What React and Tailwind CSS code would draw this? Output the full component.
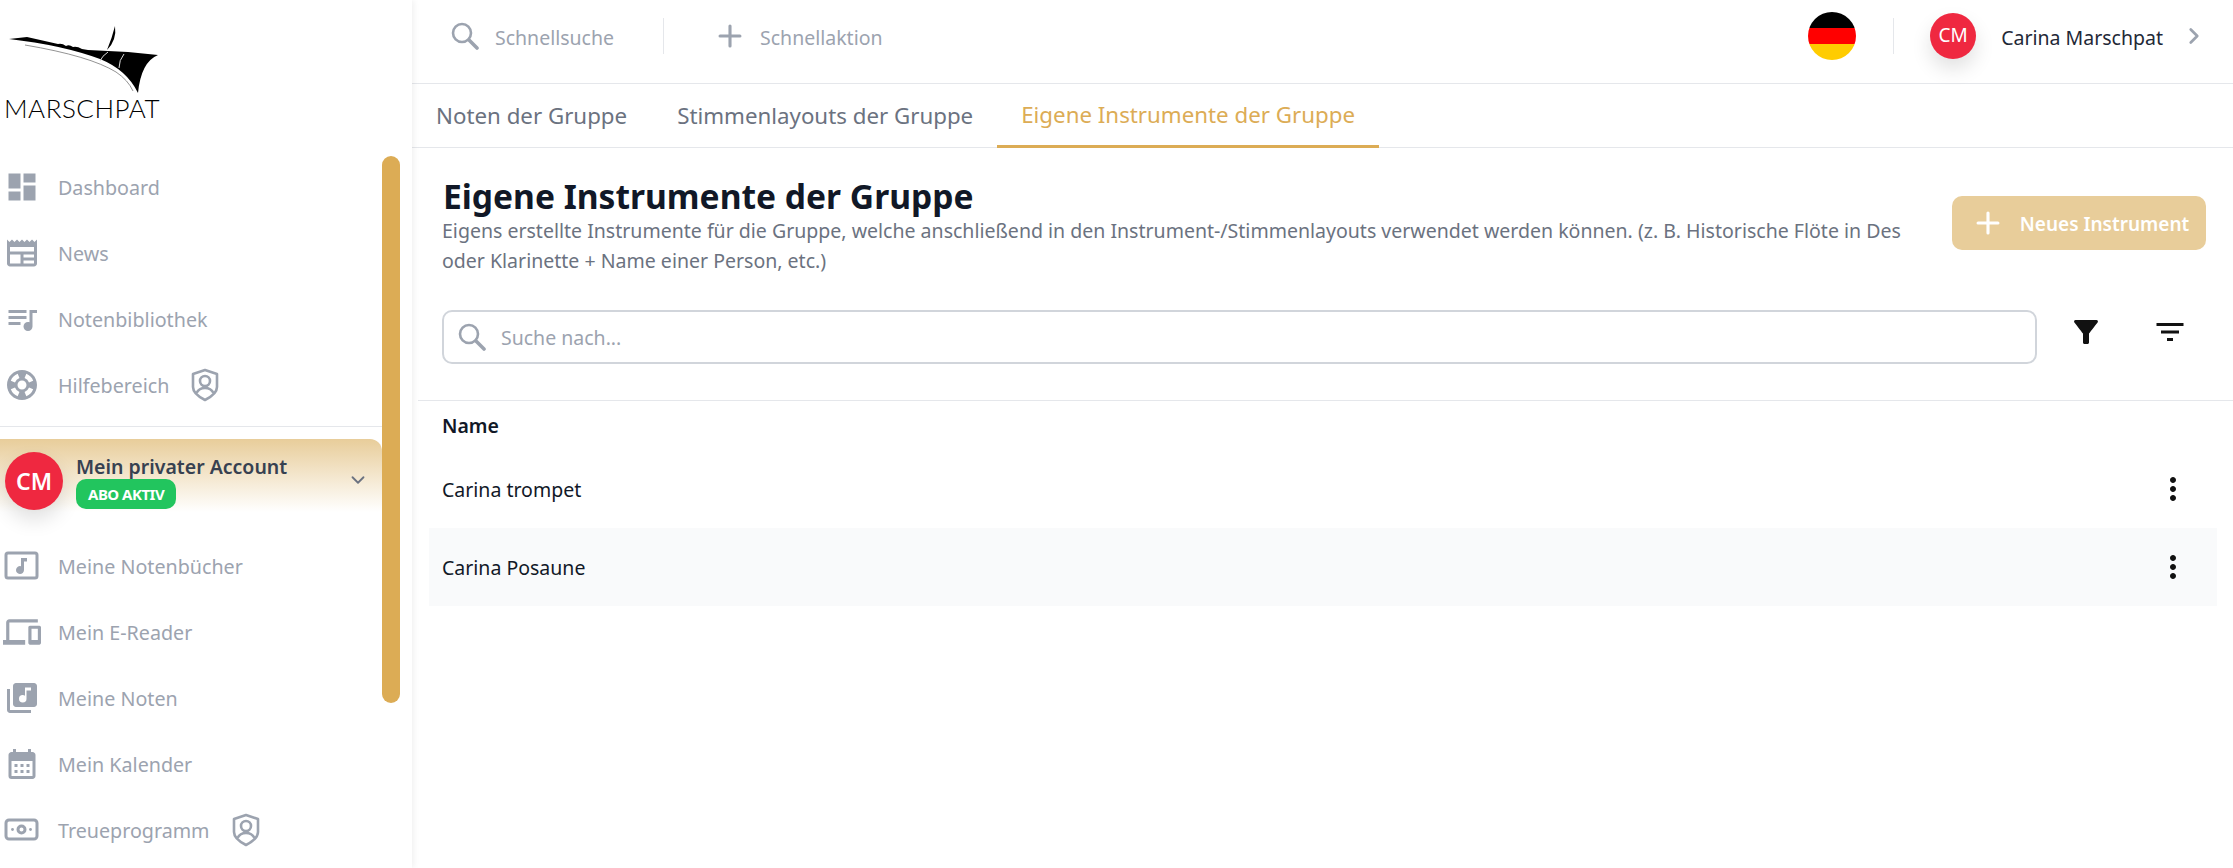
import React from 'react';
import { ChevronDown, ChevronRight, Plus } from 'lucide-react';
import {
  MdDashboard, MdNewspaper, MdQueueMusic, MdSupport, MdOutlineDevices, MdLibraryMusic,
  MdCalendarMonth, MdFilterAlt, MdFilterList, MdMoreVert,
} from 'react-icons/md';

const FONT = "font-['Noto_Sans',sans-serif]";

// square with a note in it
const NotebookIcon = ({ size = 36 }) => (
  <svg width={size} height={size} viewBox="0 0 36 36" fill="none">
    <rect x="2" y="5" width="31" height="25" rx="2" stroke="currentColor" strokeWidth="3" />
    <path d="M17 10h6v3.5h-3v8.5a4 4 0 1 1-3-3.8z" fill="currentColor" />
  </svg>
);

const MoneyIcon = ({ size = 36 }) => (
  <svg width={size} height={size} viewBox="0 0 36 36" fill="none">
    <rect x="2" y="8" width="31" height="19" rx="3" stroke="currentColor" strokeWidth="3" />
    <circle cx="17.5" cy="17.5" r="3.5" stroke="currentColor" strokeWidth="3" />
    <circle cx="8.5" cy="17.5" r="1.4" fill="currentColor" />
    <circle cx="26.5" cy="17.5" r="1.4" fill="currentColor" />
  </svg>
);

const ShieldIcon = ({ className }) => (
  <svg width="28" height="34" viewBox="0 0 28 34" fill="none" className={className}>
    <path d="M14 2 L26 6 V19 C26 25 20 29 14 32 C8 29 2 25 2 19 V6Z" stroke="currentColor" strokeWidth="2.6" strokeLinejoin="round" />
    <circle cx="14" cy="13" r="5" stroke="currentColor" strokeWidth="2.6" />
    <path d="M5.5 25 C7.5 21 10.5 20 14 20 C17.5 20 20.5 21 22.5 25" stroke="currentColor" strokeWidth="2.6" />
  </svg>
);

const SearchIcon = () => (
  <svg width="28" height="28" viewBox="0 0 28 28" fill="none">
    <circle cx="11" cy="11" r="9" stroke="currentColor" strokeWidth="2.6" />
    <path d="M18 18 L26 26" stroke="currentColor" strokeWidth="3.6" strokeLinecap="round" />
  </svg>
);

const Logo = () => (
  <svg width="160" height="70" viewBox="0 25 160 70" className="block">
    <path d="M9 39 L27 37 L58 44 Q62 43 66 46 Q69 44 73 47 Q77 46 82 49 L88 50 L128 52 L158 55 Q141 62 138 93 Q127 70 100 59 Q62 45 9 39Z" fill="#000" />
    <path d="M25 45 Q90 56 116 72 Q128 80 133 91" fill="none" stroke="#777" strokeWidth="0.8" />
    <path d="M115 26 Q117 40 107 50 Q112 38 115 26Z" fill="#000" />
    <path d="M108 52 Q102 56 100 61 M124 54 Q119 60 119 68" fill="none" stroke="#ddd" strokeWidth="1" />
  </svg>
);

const NavItem = ({ icon: Icon, label, iconSize = 36, shield }) => (
  <div className="flex h-[66px] items-center text-[#9ca3af]">
    <div className="flex w-[44px] justify-center"><Icon size={iconSize} /></div>
    <span className="ml-[14px] pt-[2px] text-[19.7px]">{label}</span>
    {shield && <ShieldIcon className="ml-[22px]" />}
  </div>
);

const Sidebar = () => (
  <aside className="relative z-10 flex h-[868px] w-[412px] shrink-0 flex-col overflow-hidden bg-white shadow-[2px_0_6px_rgba(0,0,0,0.06)]">
    <div className="h-[154px] shrink-0">
      <div className="pt-[25px]"><Logo /></div>
      <div className="pl-[4px] font-['Lato',sans-serif] text-[26px] leading-[26px] font-light tracking-[0.5px] text-black">MARSCHPAT</div>
    </div>
    <div className="w-[382px]">
      <NavItem icon={MdDashboard} label="Dashboard" />
      <NavItem icon={MdNewspaper} label="News" />
      <NavItem icon={MdQueueMusic} label="Notenbibliothek" />
      <NavItem icon={MdSupport} label="Hilfebereich" shield />
      <div className="mt-[8px] border-t border-gray-200" />
      <div className="mt-[12px] mb-[21px] flex h-[73px] items-start rounded-tr-xl bg-gradient-to-b from-[#e8cd9a] to-white pl-[5px]">
        <div className="mt-[13px] flex h-[58px] w-[58px] shrink-0 items-center justify-center rounded-full bg-[#ef2840] text-[23px] font-semibold text-white shadow-[0_10px_20px_rgba(0,0,0,0.12)]">CM</div>
        <div className="ml-[13px] flex-1 pt-[14px]">
          <div className="text-[19.5px] leading-[28px] font-semibold text-[#374151]">Mein privater Account</div>
          <div className="-mt-[2px] inline-block rounded-[10px] bg-[#22c55e] px-[12px] text-[15px] leading-[30px] font-bold tracking-[-0.5px] text-white">ABO AKTIV</div>
        </div>
        <ChevronDown size={22} className="mt-[30px] mr-[13px] text-[#6b7280]" />
      </div>
      <NavItem icon={NotebookIcon} label="Meine Notenbücher" />
      <NavItem icon={MdOutlineDevices} label="Mein E-Reader" iconSize={38} />
      <NavItem icon={MdLibraryMusic} label="Meine Noten" />
      <NavItem icon={MdCalendarMonth} label="Mein Kalender" />
      <NavItem icon={MoneyIcon} label="Treueprogramm" shield />
    </div>
    {/* scrollbar thumb */}
    <div className="absolute top-[156px] left-[382px] h-[547px] w-[18px] rounded-full bg-[#dcac55]" />
  </aside>
);

const TopBar = () => (
  <header className="flex h-[84px] shrink-0 items-center border-b border-gray-200 pr-[26px] pb-[12px] pl-[39px] text-[#9ca3af]">
    <SearchIcon />
    <span className="ml-[16px] pt-[4px] text-[19.5px]">Schnellsuche</span>
    <div className="ml-[49px] h-[36px] w-px bg-gray-200" />
    <Plus size={34} strokeWidth={2.2} className="ml-[49px]" />
    <span className="ml-[13px] pt-[4px] text-[19.5px]">Schnellaktion</span>
    <div className="ml-auto flex h-[48px] w-[48px] flex-col overflow-hidden rounded-full">
      <div className="flex-1 bg-black" />
      <div className="flex-1 bg-[#ff0000]" />
      <div className="flex-1 bg-[#ffcc00]" />
    </div>
    <div className="ml-[37px] h-[36px] w-px bg-gray-200" />
    <div className="ml-[36px] flex h-[46px] w-[46px] items-center justify-center rounded-full bg-[#ef2840] text-[19px] text-white shadow-[0_10px_20px_rgba(0,0,0,0.12)]">CM</div>
    <span className="ml-[25px] pt-[4px] text-[19.5px] text-[#1f2937]">Carina Marschpat</span>
    <ChevronRight size={26} strokeWidth={2.5} className="ml-[18px]" />
  </header>
);

const Tabs = () => (
  <nav className="flex h-[64px] shrink-0 border-b border-gray-200 text-[22.3px] text-[#6b7280]">
    <div className="flex items-center pl-[24px]">Noten der Gruppe</div>
    <div className="ml-[50px] flex items-center">Stimmenlayouts der Gruppe</div>
    <div className="ml-[24px] -mb-px flex items-center border-b-[3px] border-[#dcac55] px-[24px] text-[#dcac55]">Eigene Instrumente der Gruppe</div>
  </nav>
);

const Row = ({ name, striped }) => (
  <div className={`flex h-[78px] items-center justify-between pr-[26px] pl-[13px] text-[19.5px] text-[#111827] ${striped ? 'bg-[#f9fafb]' : ''}`}>
    <span className="pt-[2px]">{name}</span>
    <MdMoreVert size={36} className="text-[#111]" />
  </div>
);

export default function App() {
  return (
    <div className={`flex h-[868px] w-[2233px] overflow-hidden bg-white ${FONT}`}>
      <Sidebar />
      <main className="flex min-w-0 flex-1 flex-col">
        <TopBar />
        <Tabs />
        <div className="flex items-start justify-between pt-[29px] pr-[27px] pl-[31px]">
          <div className="w-[1480px]">
            <h1 className="text-[33.6px] leading-[39px] font-bold text-[#111827]">Eigene Instrumente der Gruppe</h1>
            <p className="-ml-px text-[19.55px] leading-[30px] text-[#6b7280]">Eigens erstellte Instrumente für die Gruppe, welche anschließend in den Instrument-/Stimmenlayouts verwendet werden können. (z. B. Historische Flöte in Des oder Klarinette + Name einer Person, etc.)</p>
          </div>
          <button className="mt-[19px] flex h-[54px] w-[254px] items-center justify-center rounded-[10px] bg-[#e8cd9a] pl-[2px] text-[19px] font-semibold text-white">
            <Plus size={34} strokeWidth={2.2} className="mr-[15px]" />
            <span className="pt-[2px]">Neues Instrument</span>
          </button>
        </div>
        <div className="mt-[34px] flex items-center pr-[33px] pl-[30px]">
          <div className="flex h-[54px] w-[1595px] items-center rounded-[10px] border-2 border-[#d1d5db] pl-[14px] text-[#9ca3af]">
            <SearchIcon />
            <span className="ml-[15px] pt-[2px] text-[19.5px]">Suche nach...</span>
          </div>
          <MdFilterAlt size={36} className="mb-[10px] ml-[31px] text-[#111]" />
          <MdFilterList size={36} className="mb-[10px] ml-[48px] text-[#111]" />
        </div>
        <div className="mt-[36px] ml-[6px] border-t border-gray-200" />
        <div className="flex h-[49px] items-center pl-[30px] text-[19.5px] font-semibold text-[#111827]">Name</div>
        <div className="mr-[16px] ml-[17px]">
          <Row name="Carina trompet" />
          <Row name="Carina Posaune" striped />
        </div>
      </main>
    </div>
  );
}
